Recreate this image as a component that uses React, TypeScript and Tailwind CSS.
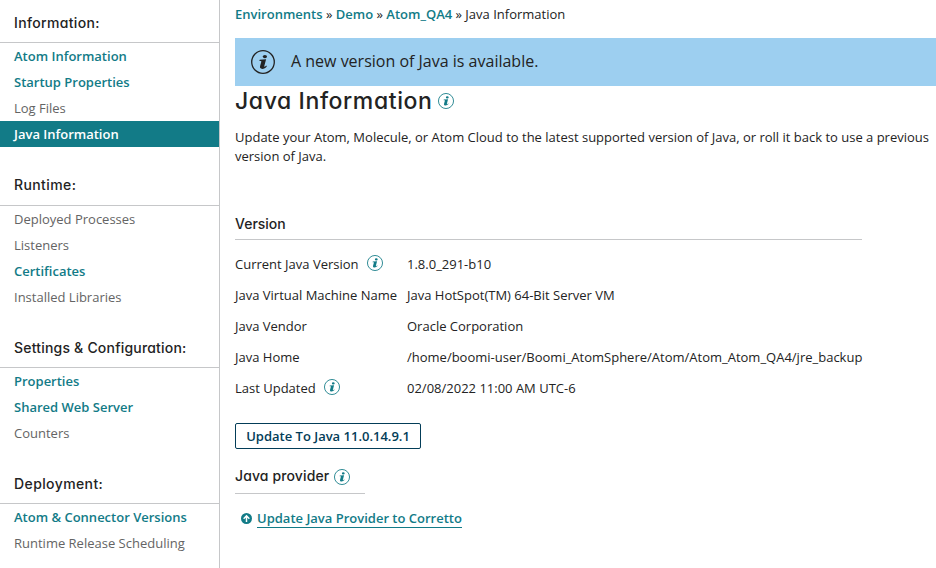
import React from "react";

const heading = "font-['Inter','Open_Sans',sans-serif] [font-feature-settings:'cv11'] font-medium text-[#232323] whitespace-nowrap";

type Item = { label: string; link?: boolean; active?: boolean };
type Section = { title: string; box: string; spacing: string; items: Item[] };

const sections: Section[] = [
  {
    title: "Information:",
    box: "h-[43px] pb-2.5",
    spacing: "tracking-[0.35px]",
    items: [
      { label: "Atom Information", link: true },
      { label: "Startup Properties", link: true },
      { label: "Log Files" },
      { label: "Java Information", active: true },
    ],
  },
  {
    title: "Runtime:",
    box: "h-[59px] pb-[11px]",
    spacing: "tracking-[0.4px]",
    items: [
      { label: "Deployed Processes" },
      { label: "Listeners" },
      { label: "Certificates", link: true },
      { label: "Installed Libraries" },
    ],
  },
  {
    title: "Settings & Configuration:",
    box: "h-[58px] pb-2.5",
    spacing: "tracking-[0.2px]",
    items: [
      { label: "Properties", link: true },
      { label: "Shared Web Server", link: true },
      { label: "Counters" },
    ],
  },
  {
    title: "Deployment:",
    box: "h-[58px] pb-2.5",
    spacing: "tracking-[0.4px]",
    items: [
      { label: "Atom & Connector Versions", link: true },
      { label: "Runtime Release Scheduling" },
    ],
  },
];

function InfoIcon({ className }: { className: string }) {
  return (
    <svg viewBox="0 0 24 24" fill="none" className={`shrink-0 ${className}`}>
      <circle cx="12" cy="12" r="11.3" stroke="currentColor" strokeWidth="1.3" />
      <ellipse cx="13.9" cy="6.6" rx="2.1" ry="1.6" fill="currentColor" />
      <path
        d="M8.700 9.800 15.100 9.200 13.300 16c-.2.8.3 1 .9.500l1-.9.700.7c-1.300 1.700-3 2.600-4.600 2.600-1.900 0-2.700-1.100-2.200-2.800l1.200-4.300c.1-.6-.1-.8-.7-.8H8.400z"
        fill="currentColor"
      />
    </svg>
  );
}

function Sidebar() {
  return (
    <nav className="w-[220px] shrink-0 border-r border-[#c6c7c9]">
      {sections.map((s) => (
        <section key={s.title}>
          <h2 className={`${s.box} ${s.spacing} ${heading} flex flex-col justify-end border-b border-[#c6c7c9] pl-3.5 text-sm leading-[18px]`}>
            {s.title}
          </h2>
          <ul>
            {s.items.map((i) => (
              <li
                key={i.label}
                className={`h-[26px] pl-3.5 leading-[26px] whitespace-nowrap ${
                  i.active ? "bg-[#127b87] font-semibold text-white" : i.link ? "font-semibold text-[#127b87]" : "text-[#646464]"
                }`}
              >
                {i.label}
              </li>
            ))}
          </ul>
        </section>
      ))}
    </nav>
  );
}

const rows = [
  { label: "Current Java Version", info: true, value: "1.8.0_291-b10" },
  { label: "Java Virtual Machine Name", value: "Java HotSpot(TM) 64-Bit Server VM" },
  { label: "Java Vendor", value: "Oracle Corporation" },
  { label: "Java Home", value: "/home/boomi-user/Boomi_AtomSphere/Atom/Atom_Atom_QA4/jre_backup" },
  { label: "Last Updated", info: true, value: "02/08/2022 11:00 AM UTC-6" },
];

export default function App() {
  return (
    <div className="flex h-[568px] w-[936px] overflow-hidden bg-white font-['Open_Sans',sans-serif] text-[13px] text-[#232323]">
      <Sidebar />
      <main className="min-w-0 flex-1 pl-[15px]">
        <div className="h-[38px] pt-[5px] leading-[18px] whitespace-nowrap">
          <span className="font-semibold text-[#127b87]">Environments</span> »{" "}
          <span className="font-semibold text-[#127b87]">Demo</span> »{" "}
          <span className="font-semibold text-[#127b87]">Atom_QA4</span> » Java Information
        </div>
        <div className="flex h-12 items-center bg-[#9dcff0] pl-4 text-base">
          <InfoIcon className="size-6" />
          <span className="ml-4 pb-0.5">A new version of Java is available.</span>
        </div>
        <div className="flex h-[42px] items-start">
          <h1 className={`${heading} w-[197px] text-[23px] leading-[30px] tracking-[0.6px]`}>Java Information</h1>
          <InfoIcon className="mt-[7px] ml-1.5 size-4 text-[#127b87]" />
        </div>
        <p className="h-[87px] leading-[19px]">
          Update your Atom, Molecule, or Atom Cloud to the latest supported version of Java, or roll it back to use a previous version of Java.
        </p>
        <h3 className={`${heading} h-[25px] w-[627px] border-b border-[#c6c7c9] text-sm leading-[18px]`}>Version</h3>
        <dl className="mt-[9px]">
          {rows.map((r) => (
            <div key={r.label} className="flex h-[31px] items-center whitespace-nowrap">
              <dt className="flex w-[172px] items-center">
                {r.label}
                {r.info && <InfoIcon className="mb-[3px] ml-2 size-4 text-[#127b87]" />}
              </dt>
              <dd>{r.value}</dd>
            </div>
          ))}
        </dl>
        <button className="mt-[19px] flex h-[26px] w-[186px] items-center justify-center rounded-[2px] border border-[#033d58] pt-px font-semibold text-[#033d58]">
          Update To Java 11.0.14.9.1
        </button>
        <div className="mt-[18px] flex h-[27px] w-[130px] items-start border-b border-[#c6c7c9]">
          <h3 className={`${heading} w-[94px] text-sm leading-[18px] tracking-[0.12px]`}>Java provider</h3>
          <InfoIcon className="mt-[2px] ml-[5px] size-4 text-[#127b87]" />
        </div>
        <div className="mt-[15px] flex items-start pl-1.5 text-[#127b87]">
          <svg viewBox="0 0 12 12" fill="none" className="mt-1 size-[11px]">
            <circle cx="6" cy="6" r="6" fill="currentColor" />
            <path d="M6 9.800V3.400M2.900 6.200 6 3.100l3.100 3.100" stroke="white" strokeWidth="1.600" />
          </svg>
          <a className="ml-[5px] h-[19px] border-b border-[#127b87] leading-[18px] font-semibold whitespace-nowrap">Update Java Provider to Corretto</a>
        </div>
      </main>
    </div>
  );
}
